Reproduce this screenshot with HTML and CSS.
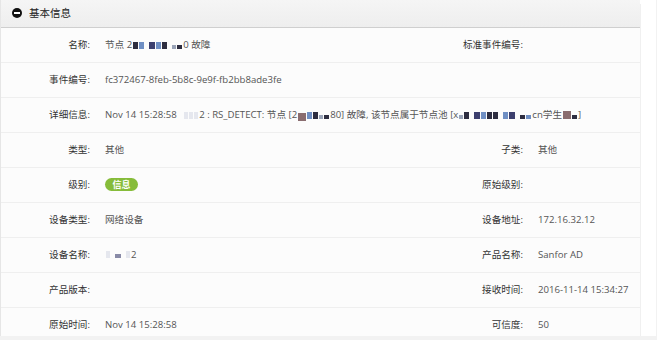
FILE: index.html
```html
<!DOCTYPE html>
<html>
<head>
<meta charset="utf-8">
<title>基本信息</title>
<link rel="stylesheet" href="styles.css">
</head>
<body>
<div class="wrap">
  <div class="panel">
    <div class="panel-head">
      <svg class="toggle" width="10" height="10" viewBox="0 0 10 10"><circle cx="5" cy="5" r="5" fill="#111"/><rect x="2" y="4" width="6" height="2" fill="#fff"/></svg>
      <span>基本信息</span>
    </div>

    <div class="row">
      <div class="lbl">名称:</div>
      <div class="val">节点 2<span class="mask"><i class="m3"></i><i class="m2"></i><i class="sp"></i><i class="m1"></i><i class="m2"></i><i class="m3"></i><i class="sp"></i><i class="m4 s"></i><i class="m3 s"></i></span>0 故障</div>
      <div class="lbl">标准事件编号:</div>
      <div class="val"></div>
    </div>

    <div class="row">
      <div class="lbl">事件编号:</div>
      <div class="val wide">fc372467-8feb-5b8c-9e9f-fb2bb8ade3fe</div>
    </div>

    <div class="row">
      <div class="lbl">详细信息:</div>
      <div class="val wide">Nov 14 15:28:58 <span class="mask faint"><i class="sp"></i><i class="m5"></i><i class="m5"></i><i class="m5"></i></span>2 : RS_DETECT: 节点 [2<span class="mask"><i class="m6 s"></i><i class="m2"></i><i class="m3"></i><i class="m4 s"></i><i class="m3 s"></i></span>80] 故障, 该节点属于节点池 [x<span class="mask"><i class="m4 s"></i><i class="m3"></i><i class="sp"></i><i class="m1"></i><i class="m2"></i><i class="m3"></i><i class="m3"></i><i class="sp"></i><i class="m2"></i><i class="m1"></i><i class="sp"></i><i class="m3 s"></i><i class="m2 s"></i></span>cn学生<span class="mask"><i class="m6"></i><i class="m3 s"></i></span>]</div>
    </div>

    <div class="row">
      <div class="lbl">类型:</div>
      <div class="val">其他</div>
      <div class="lbl">子类:</div>
      <div class="val">其他</div>
    </div>

    <div class="row">
      <div class="lbl">级别:</div>
      <div class="val"><span class="badge">信息</span></div>
      <div class="lbl">原始级别:</div>
      <div class="val"></div>
    </div>

    <div class="row">
      <div class="lbl">设备类型:</div>
      <div class="val">网络设备</div>
      <div class="lbl">设备地址:</div>
      <div class="val">172.16.32.12</div>
    </div>

    <div class="row">
      <div class="lbl">设备名称:</div>
      <div class="val"><span class="mask faint"><i class="m5"></i><i class="sp"></i><i class="m1 s"></i><i class="sp"></i><i class="m5"></i></span>2</div>
      <div class="lbl">产品名称:</div>
      <div class="val">Sanfor AD</div>
    </div>

    <div class="row">
      <div class="lbl">产品版本:</div>
      <div class="val"></div>
      <div class="lbl">接收时间:</div>
      <div class="val">2016-11-14 15:34:27</div>
    </div>

    <div class="row last">
      <div class="lbl">原始时间:</div>
      <div class="val">Nov 14 15:28:58</div>
      <div class="lbl">可信度:</div>
      <div class="val">50</div>
    </div>
  </div>
  <div class="gutter"></div>
</div>
</body>
</html>
```

FILE: styles.css
```css
body {
   margin: 0;
   background-color: #f2f2f2;
   font-family: "Open Sans", "Noto Sans CJK SC", sans-serif;
   font-size: 9.6px;
   color: #555;
}

.wrap {
   display: flex;
   width: 656px;
   height: 336px;
   background-color: #fff;
}

.panel {
   width: 639px;
   border-left: 1px solid #e6e6e6;
   background-color: #fcfcfc;
}

.gutter {
   width: 16px;
   margin-top: 4px;
   background-color: #fff;
   border-left: 1px solid #f0f0f0;
}

.panel-head {
   display: flex;
   align-items: center;
   gap: 7px;
   height: 25px;
   padding: 0 0 2px 11px;
   background: linear-gradient(#f5f5f5, #eeeeee);
   border-bottom: 1px solid #cfcfcf;
   font-size: 10.5px;
   color: #222;
}

.row {
   display: grid;
   grid-template-columns: 89px 313px 90px 102px;
   column-gap: 15px;
   align-items: center;
   height: 32px;
   padding-bottom: 2px;
   border-bottom: 1px solid #efefef;
}

.row.last {
   border-bottom: none;
}

.lbl {
   text-align: right;
   color: #333;
}

.val {
   white-space: nowrap;
}

.val.wide {
   grid-column: 2 / 5;
}

.badge {
   display: inline-block;
   width: 33px;
   height: 13px;
   line-height: 13px;
   border-radius: 7px;
   background-color: #86bc3a;
   color: #fff;
   font-weight: bold;
   text-align: center;
   font-size: 9px;
   vertical-align: middle;
}

/* pixelated redaction blocks */
.mask {
   display: inline-flex;
   align-items: center;
   gap: 1px;
   margin: 0 1px;
   vertical-align: middle;
}

.mask i {
   display: inline-block;
   height: 7px;
}

.mask i.s {
   height: 4px;
   margin-top: 3px;
}

.mask i.sp { width: 3px; }

.m1 { width: 6px; background-color: #3c3f6e; }
.m2 { width: 5px; background-color: #6f8fc4; }
.m3 { width: 5px; background-color: #2d2d40; }
.m4 { width: 4px; background-color: #9aa4b8; }
.m5 { width: 4px; background-color: #d6d9e4; }
.m6 { width: 8px; height: 8px !important; background-color: #8a6d70; }

.mask.faint i {
   opacity: 0.6;
}
```
